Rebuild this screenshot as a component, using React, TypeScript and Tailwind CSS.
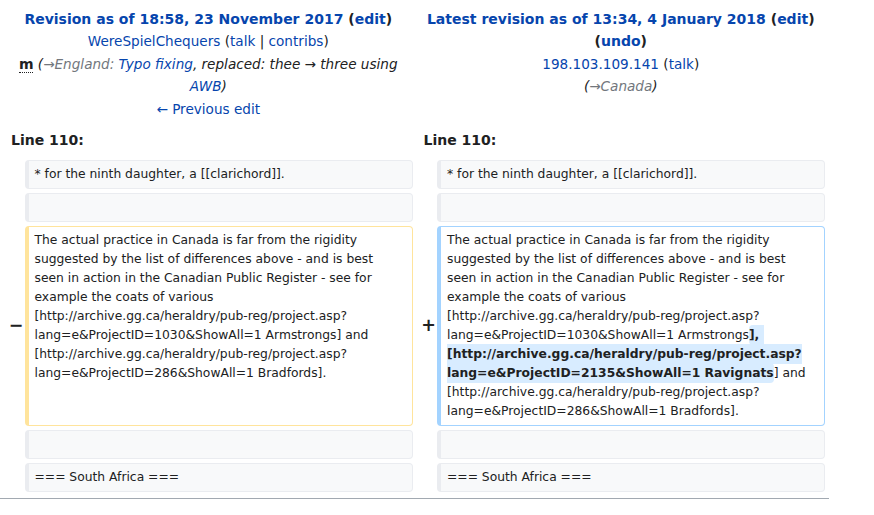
import React from "react";

const LINK = "text-[#0645ad]";
const GRAY = "text-[#72777d]";

const Marker = ({ sign }: { sign?: string }) => (
  <div className="flex items-center justify-end text-[17.5px] font-bold leading-[1.2] text-[#202122]">
    {sign && <span className="translate-x-[3px]">{sign}</span>}
  </div>
);

const Cell = ({
  kind,
  children,
}: {
  kind: "context" | "deleted" | "added";
  children?: React.ReactNode;
}) => {
  const tone =
    kind === "context"
      ? "border-[#eaecf0] bg-[#f8f9fa]"
      : kind === "deleted"
      ? "border-[#ffe49c] bg-white"
      : "border-[#a3d3ff] bg-white";
  return (
    <div
      className={
        "rounded-[4px] border border-l-4 px-[6px] py-[4px] text-[12.32px] leading-[19px] whitespace-pre-wrap break-words text-[#202122] " +
        tone
      }
    >
      {children ?? <br />}
    </div>
  );
};

const Ins = ({ children }: { children: React.ReactNode }) => (
  <span className="rounded-[4px] bg-[#d8ecff] py-[3px] font-bold">{children}</span>
);

export default function App() {
  return (
    <div className="min-h-[515px] bg-white font-['DejaVu_Sans',sans-serif] text-[#202122]">
      <div className="grid w-[829px] grid-cols-[16.5px_388px_16.5px_388px] gap-[4px] p-[4px]">
        {/* old revision header */}
        <div className="col-span-2 px-[7px] pt-[4px] text-center text-[13.6px] leading-[22.4px]">
          <div className="text-[14px] font-bold">
            <a className={LINK}>Revision as of 18:58, 23 November 2017</a> (
            <a className={LINK}>edit</a>)
          </div>
          <div>
            <a className={LINK}>WereSpielChequers</a> (<a className={LINK}>talk</a> |{" "}
            <a className={LINK}>contribs</a>)
          </div>
          <div>
            <abbr className="border-b border-dotted border-[#202122] text-[14px] font-bold no-underline">m</abbr>{" "}
            <span className="italic">
              (<span className={GRAY}>→England: </span>
              <a className={LINK}>Typo fixing</a>, replaced: thee → three using{" "}
              <a className={LINK}>AWB</a>)
            </span>
          </div>
          <div>
            <a className={LINK}>← Previous edit</a>
          </div>
        </div>

        {/* new revision header */}
        <div className="col-span-2 px-[7px] pt-[4px] text-center text-[13.6px] leading-[22.4px]">
          <div className="text-[14px] font-bold">
            <a className={LINK}>Latest revision as of 13:34, 4 January 2018</a> (
            <a className={LINK}>edit</a>) (<a className={LINK}>undo</a>)
          </div>
          <div>
            <a className={LINK}>198.103.109.141</a> (<a className={LINK}>talk</a>)
          </div>
          <div>
            <span className="italic">
              (<span className={GRAY}>→Canada</span>)
            </span>
          </div>
        </div>

        <div className="col-span-2 px-[7px] py-[4.6px] text-[14px] font-bold leading-[22.4px]">Line 110:</div>
        <div className="col-span-2 px-[7px] py-[4.6px] text-[14px] font-bold leading-[22.4px]">Line 110:</div>

        <Marker />
        <Cell kind="context">* for the ninth daughter, a [[clarichord]].</Cell>
        <Marker />
        <Cell kind="context">* for the ninth daughter, a [[clarichord]].</Cell>

        <Marker />
        <Cell kind="context" />
        <Marker />
        <Cell kind="context" />

        <Marker sign="−" />
        <Cell kind="deleted">
          The actual practice in Canada is far from the rigidity suggested by the list of differences above - and is
          best seen in action in the Canadian Public Register - see for example the coats of various
          [http://archive.gg.ca/heraldry/pub-reg/project.asp?lang=e&amp;ProjectID=1030&amp;ShowAll=1 Armstrongs] and
          [http://archive.gg.ca/heraldry/pub-reg/project.asp?lang=e&amp;ProjectID=286&amp;ShowAll=1 Bradfords].
        </Cell>
        <Marker sign="+" />
        <Cell kind="added">
          The actual practice in Canada is far from the rigidity suggested by the list of differences above - and is
          best seen in action in the Canadian Public Register - see for example the coats of various
          [http://archive.gg.ca/heraldry/pub-reg/project.asp?lang=e&amp;ProjectID=1030&amp;ShowAll=1 Armstrongs
          <Ins>
            ], [http://archive.gg.ca/heraldry/pub-reg/project.asp?lang=e&amp;ProjectID=2135&amp;ShowAll=1 Ravignats
          </Ins>
          ] and [http://archive.gg.ca/heraldry/pub-reg/project.asp?lang=e&amp;ProjectID=286&amp;ShowAll=1 Bradfords].
        </Cell>

        <Marker />
        <Cell kind="context" />
        <Marker />
        <Cell kind="context" />

        <Marker />
        <Cell kind="context">=== South Africa ===</Cell>
        <Marker />
        <Cell kind="context">=== South Africa ===</Cell>
      </div>
      <div className="mt-[2px] h-px w-[829px] bg-[#a2a9b1]" />
    </div>
  );
}
